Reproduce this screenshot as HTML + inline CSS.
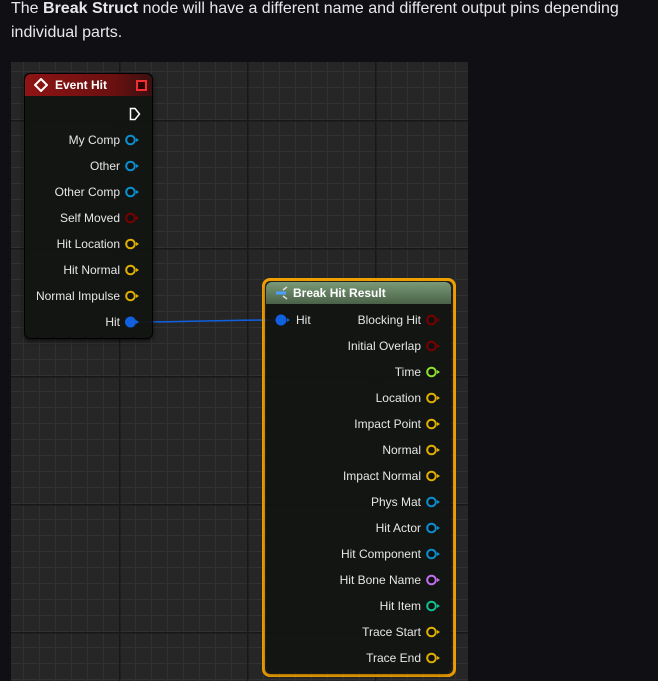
<!DOCTYPE html>
<html><head><style>
body{margin:0;width:658px;height:681px;background:#101014;overflow:hidden;font-family:"Liberation Sans",sans-serif;position:relative}
.txt{position:absolute;left:11px;top:-3px;color:#e8e8ea;font-size:16px;line-height:24px;white-space:nowrap}
.graph{position:absolute;left:11px;top:62px;width:457px;height:619px;background-color:#262626;
background-image:linear-gradient(90deg,#181818 1.5px,transparent 1.5px),linear-gradient(#181818 1.5px,transparent 1.5px),linear-gradient(90deg,#313131 1px,transparent 1px),linear-gradient(#313131 1px,transparent 1px);
background-size:128px 128px,128px 128px,16px 16px,16px 16px;background-position:108px 58px,108px 58px,12px 9px,12px 9px}
.node{position:absolute;background:rgba(18,20,18,.93);border-radius:6px;box-shadow:0 2px 4px rgba(0,0,0,.6)}
.hdr{position:absolute;left:0;right:0;top:0;height:22px;border-radius:6px 6px 0 0;color:#fff;font-weight:bold;font-size:12px;line-height:22px}
.lbl{position:absolute;color:#e6e6e6;font-size:12px;line-height:14px;white-space:nowrap}
.r{text-align:right}
svg.p{position:absolute;width:14px;height:12px}
</style></head><body>
<div class="txt">The <b>Break Struct</b> node will have a different name and different output pins depending<br>individual parts.</div>
<div class="graph"></div>
<svg style="position:absolute;left:0;top:0" width="658" height="681"><path d="M135 322 C200 322 210 320 280 320" stroke="#1060e0" stroke-width="1.5" fill="none"/></svg>

<div class="node" style="left:24px;top:73px;width:127px;height:264px;border:1px solid #000">
 <div class="hdr" style="background:linear-gradient(90deg,#8e1414,#6a1010 70%,#3a1010);padding-left:30px">Event Hit</div>
 <svg style="position:absolute;left:9px;top:4px" width="14" height="14"><path d="M7 1L13 7L7 13L1 7Z" fill="none" stroke="#fff" stroke-width="2"/></svg>
 <div style="position:absolute;left:111px;top:6px;width:7px;height:7px;background:#300;border:2px solid #f03030"></div>
 <svg style="position:absolute;left:104px;top:33px" width="12" height="14"><path d="M1.5 1.5H6L10.5 7L6 12.5H1.5Z" fill="none" stroke="#fff" stroke-width="1.5"/></svg>
</div>

<div style="position:absolute;left:262px;top:278px;width:188px;height:393px;border:3px solid #f0a000;border-radius:8px"></div>
<div class="node" style="left:266px;top:282px;width:185px;height:390px;border-radius:5px">
 <div class="hdr" style="background:linear-gradient(180deg,#7a9a78,#4a6248);padding-left:27px">Break Hit Result</div>
 <svg style="position:absolute;left:8px;top:4px" width="16" height="14"><path d="M2 7H12" stroke="#4aa0ff" stroke-width="3"/><path d="M9 4L13 1M9 10L13 13" stroke="#ddd" stroke-width="1.5"/></svg>
</div>
<svg style="position:absolute;left:275px;top:314px" width="16" height="12"><circle cx="6" cy="6" r="5.5" fill="#1060e0"/><path d="M12 4L15 6L12 8Z" fill="#1060e0"/></svg>
<div class="lbl" style="left:296px;top:313px">Hit</div>

<div id="pins"></div>
<script>
var L=[["My Comp","#0a90d0"],["Other","#0a90d0"],["Other Comp","#0a90d0"],["Self Moved","#7a0000"],["Hit Location","#e0b000"],["Hit Normal","#e0b000"],["Normal Impulse","#e0b000"],["Hit","#1060e0",1]];
var R=[["Blocking Hit","#7a0000"],["Initial Overlap","#7a0000"],["Time","#90e030"],["Location","#e0b000"],["Impact Point","#e0b000"],["Normal","#e0b000"],["Impact Normal","#e0b000"],["Phys Mat","#0a90d0"],["Hit Actor","#0a90d0"],["Hit Component","#0a90d0"],["Hit Bone Name","#c070f0"],["Hit Item","#10c090"],["Trace Start","#e0b000"],["Trace End","#e0b000"]];
var h="";
function pin(arr,x,y0,step){arr.forEach(function(p,i){var y=y0+i*step;
h+='<div class="lbl r" style="right:'+(658-x+5)+'px;top:'+(y-7)+'px">'+p[0]+'</div>';
h+='<svg class="p" style="left:'+x+'px;top:'+(y-6)+'px"><circle cx="5.5" cy="6" r="'+(p[2]?5.5:4.3)+'" fill="'+(p[2]?p[1]:'#111')+'" stroke="'+p[1]+'" stroke-width="'+(p[2]?0:2)+'"/><path d="M11 4L14 6L11 8Z" fill="'+p[1]+'"/></svg>';});}
pin(L,125,140,26);pin(R,426,320,26);
document.getElementById("pins").innerHTML=h;
</script>
</body></html>
